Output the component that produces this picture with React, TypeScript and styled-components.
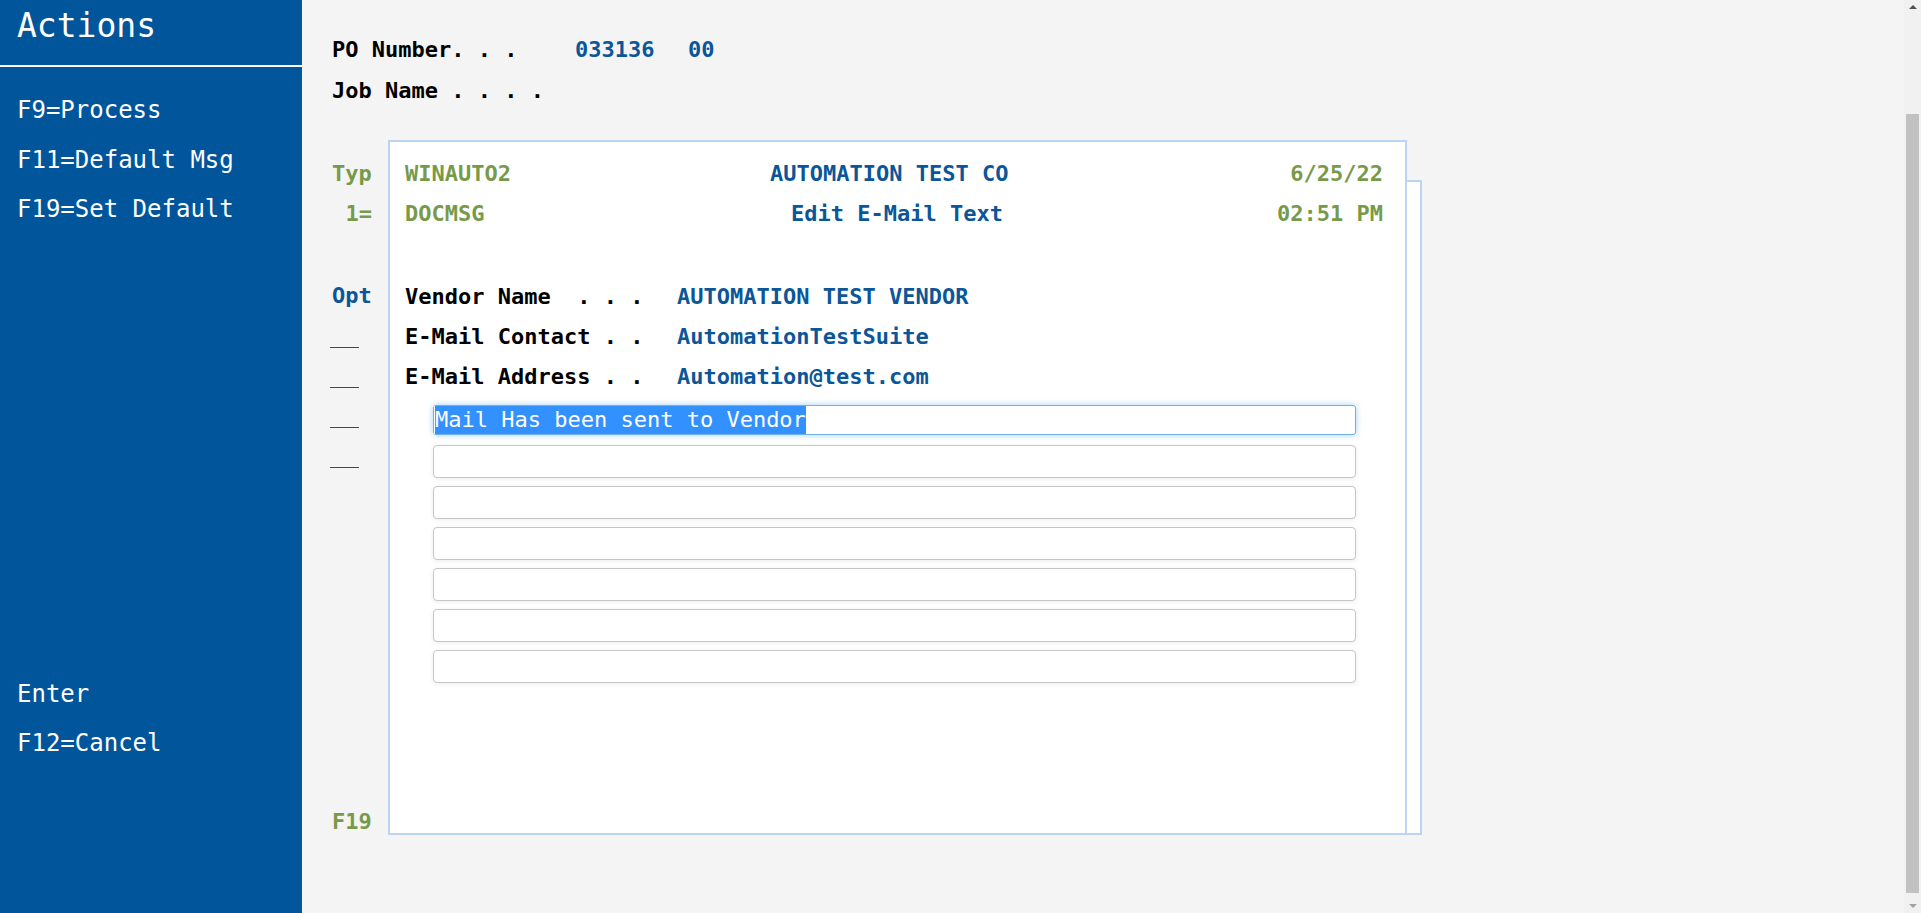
import React from "react";
import styled, { createGlobalStyle } from "styled-components";

const BLUE = "#0b5699";
const GREEN = "#779a4a";
const SIDEBAR = "#01559b";
const FRAME = "#bcd4f4";
const MONO = `"DejaVu Sans Mono", "Liberation Mono", monospace`;

const GlobalStyle = createGlobalStyle`
  html, body { margin: 0; padding: 0; height: 100%; overflow: hidden; }
  body { font-family: ${MONO}; background: #f4f4f4; }
  #root { height: 100%; }
`;

const Shell = styled.div`
  display: flex;
  height: 100vh;
`;

const Sidebar = styled.aside`
  width: 302px;
  flex: none;
  background: ${SIDEBAR};
  color: #fff;
  display: flex;
  flex-direction: column;
`;

const SidebarTitle = styled.h1`
  margin: 0;
  box-sizing: border-box;
  height: 67px;
  padding: 7px 0 0 17px;
  border-bottom: 2px solid #fff;
  font-size: 33px;
  font-weight: normal;
  line-height: 38px;
`;

const ActionList = styled.ul<{ $bottom?: boolean }>`
  list-style: none;
  margin: ${(p) => (p.$bottom ? "auto 0 0" : "0")};
  padding: ${(p) => (p.$bottom ? "0 0 145px 17px" : "19px 0 0 17px")};
`;

const ActionItem = styled.li<{ $pitch: number }>`
  font-size: 24px;
  line-height: ${(p) => p.$pitch}px;
  white-space: pre;
`;

const Main = styled.main`
  flex: 1;
  min-width: 0;
  height: 100vh;
  display: flex;
`;

const Page = styled.div`
  flex: 1;
  min-width: 0;
  overflow: hidden;
  box-sizing: border-box;
  padding: 29px 0 0 30px;
  display: flex;
  flex-direction: column;
`;

const ScrollRail = styled.div`
  width: 17px;
  flex: none;
  background: #f1f1f1;
  display: flex;
  flex-direction: column;
`;

const RailButton = styled.div`
  height: 17px;
  flex: none;
  display: flex;
  align-items: center;
  justify-content: center;
`;

const Arrow = styled.span<{ $dir: "up" | "down"; $color: string }>`
  width: 0;
  height: 0;
  border-left: 4px solid transparent;
  border-right: 4px solid transparent;
  ${(p) =>
    p.$dir === "up"
      ? `border-bottom: 4px solid ${p.$color}; margin-top: -3px;`
      : `border-top: 4px solid ${p.$color}; margin-top: 3px;`}
`;

const RailTrack = styled.div`
  flex: 1;
  display: flex;
  flex-direction: column;
`;

const RailThumb = styled.div`
  flex: none;
  margin: 0 2px;
  background: #c1c1c1;
`;

const InfoRow = styled.div`
  display: grid;
  grid-template-columns: 243px 113px auto;
  font-size: 22px;
  font-weight: bold;
  line-height: 41px;
  white-space: pre;
`;

const Label = styled.span`
  color: #000;
`;

const Value = styled.span`
  color: ${BLUE};
`;

const Body = styled.div`
  display: flex;
  height: 695px;
  margin-top: 29px;
`;

const Gutter = styled.div`
  width: 56px;
  flex: none;
  display: flex;
  flex-direction: column;
  padding-top: 14px;
  font-size: 22px;
  font-weight: bold;
`;

const GutterText = styled.div<{ $color: string; $gap?: number; $lh?: number }>`
  width: 40px;
  color: ${(p) => p.$color};
  line-height: ${(p) => p.$lh ?? 40}px;
  margin-top: ${(p) => p.$gap ?? 0}px;
`;

const GutterRight = styled(GutterText)`
  text-align: right;
`;

const GutterBottom = styled(GutterText)`
  margin-top: auto;
`;

const OptSlot = styled.div`
  height: 40px;
  display: flex;
  align-items: flex-end;
  padding-bottom: 8px;
  box-sizing: border-box;
`;

const OptLine = styled.span`
  display: block;
  width: 29px;
  margin-left: -2px;
  border-bottom: 1px solid ${BLUE};
`;

const WindowStack = styled.div`
  position: relative;
  flex: none;
  width: 1019px;
`;

const BackWindow = styled.div`
  position: absolute;
  top: 40px;
  right: -15px;
  bottom: 0;
  width: 300px;
  box-sizing: border-box;
  border: 2px solid ${FRAME};
  background: #fff;
`;

const FrontWindow = styled.section`
  position: relative;
  z-index: 1;
  box-sizing: border-box;
  height: 100%;
  border: 2px solid ${FRAME};
  background: #fff;
  padding: 12px 22px 0 15px;
  font-size: 22px;
`;

const HeaderRow = styled.div<{ $offset: number }>`
  display: grid;
  grid-template-columns: ${(p) => p.$offset}px auto 1fr;
  line-height: 40px;
  font-weight: bold;
  white-space: pre;
`;

const HeadLeft = styled.span`
  color: ${GREEN};
`;

const HeadCenter = styled.span`
  color: ${BLUE};
`;

const HeadRight = styled.span`
  color: ${GREEN};
  text-align: right;
`;

const FieldRow = styled.div<{ $first?: boolean }>`
  display: grid;
  grid-template-columns: 272px auto;
  line-height: 40px;
  font-weight: bold;
  white-space: pre;
  margin-top: ${(p) => (p.$first ? 43 : 0)}px;
`;

const TextLines = styled.div`
  display: flex;
  flex-direction: column;
  gap: 8px;
  width: 923px;
  margin: 8px 0 0 28px;
`;

const FocusedField = styled.div`
  box-sizing: border-box;
  height: 30px;
  margin-bottom: 2px;
  border: 1px solid #70b1ea;
  border-radius: 3px;
  box-shadow: 0 0 6px rgba(102, 175, 233, 0.6);
  background: #fff;
  display: flex;
  align-items: stretch;
  font-size: 22px;
  font-weight: normal;
  line-height: 28px;
`;

const Selection = styled.span`
  background: #3390ff;
  color: #fff;
  white-space: pre;
  border-left: 1px solid #fff;
`;

const TextLine = styled.input`
  box-sizing: border-box;
  height: 33px;
  width: 100%;
  margin: 0;
  border: 1px solid #c6c6c6;
  border-radius: 4px;
  box-shadow: 0 1px 5px rgba(0, 0, 0, 0.08);
  background: #fff;
  padding: 0 4px;
  font-family: ${MONO};
  font-size: 22px;
  outline: none;
`;

const topActions = ["F9=Process", "F11=Default Msg", "F19=Set Default"];
const bottomActions = ["Enter", "F12=Cancel"];

const fields = [
  { label: "Vendor Name  . . .", value: "AUTOMATION TEST VENDOR" },
  { label: "E-Mail Contact . .", value: "AutomationTestSuite" },
  { label: "E-Mail Address . .", value: "Automation@test.com" },
];

// Scroll state of the page (viewport vs document height, scrolled to the end)
const scroll = { viewport: 913, content: 1029, top: 113 };
const TRACK = 913 - 34;

export default function App() {
  const thumbLen = (TRACK * scroll.viewport) / scroll.content;
  const thumbTop = (TRACK * scroll.top) / scroll.content;
  return (
    <>
      <GlobalStyle />
      <Shell>
        <Sidebar>
          <SidebarTitle>Actions</SidebarTitle>
          <ActionList>
            {topActions.map((a) => (
              <ActionItem key={a} $pitch={49.5}>
                {a}
              </ActionItem>
            ))}
          </ActionList>
          <ActionList $bottom>
            {bottomActions.map((a) => (
              <ActionItem key={a} $pitch={49}>
                {a}
              </ActionItem>
            ))}
          </ActionList>
        </Sidebar>
        <Main>
          <Page>
            <InfoRow>
              <Label>PO Number. . .</Label>
              <Value>033136</Value>
              <Value>00</Value>
            </InfoRow>
            <InfoRow>
              <Label>Job Name . . . .</Label>
            </InfoRow>
            <Body>
              <Gutter>
                <GutterText $color={GREEN}>Typ</GutterText>
                <GutterRight $color={GREEN}>1=</GutterRight>
                <GutterText $color={BLUE} $gap={42}>
                  Opt
                </GutterText>
                {[0, 1, 2, 3].map((i) => (
                  <OptSlot key={i}>
                    <OptLine />
                  </OptSlot>
                ))}
                <GutterBottom $color={GREEN} $lh={26}>
                  F19
                </GutterBottom>
              </Gutter>
              <WindowStack>
                <BackWindow />
                <FrontWindow>
                  <HeaderRow $offset={365}>
                    <HeadLeft>WINAUTO2</HeadLeft>
                    <HeadCenter>AUTOMATION TEST CO</HeadCenter>
                    <HeadRight>6/25/22</HeadRight>
                  </HeaderRow>
                  <HeaderRow $offset={386}>
                    <HeadLeft>DOCMSG</HeadLeft>
                    <HeadCenter>Edit E-Mail Text</HeadCenter>
                    <HeadRight>02:51 PM</HeadRight>
                  </HeaderRow>
                  {fields.map((f, i) => (
                    <FieldRow key={f.label} $first={i === 0}>
                      <Label>{f.label}</Label>
                      <Value>{f.value}</Value>
                    </FieldRow>
                  ))}
                  <TextLines>
                    <FocusedField>
                      <Selection>Mail Has been sent to Vendor</Selection>
                    </FocusedField>
                    {[0, 1, 2, 3, 4, 5].map((i) => (
                      <TextLine key={i} defaultValue="" aria-label={`Message line ${i + 2}`} />
                    ))}
                  </TextLines>
                </FrontWindow>
              </WindowStack>
            </Body>
          </Page>
          <ScrollRail aria-hidden="true">
            <RailButton>
              <Arrow $dir="up" $color="#505050" />
            </RailButton>
            <RailTrack>
              <RailThumb style={{ marginTop: thumbTop, height: thumbLen }} />
            </RailTrack>
            <RailButton>
              <Arrow $dir="down" $color="#a3a3a3" />
            </RailButton>
          </ScrollRail>
        </Main>
      </Shell>
    </>
  );
}
